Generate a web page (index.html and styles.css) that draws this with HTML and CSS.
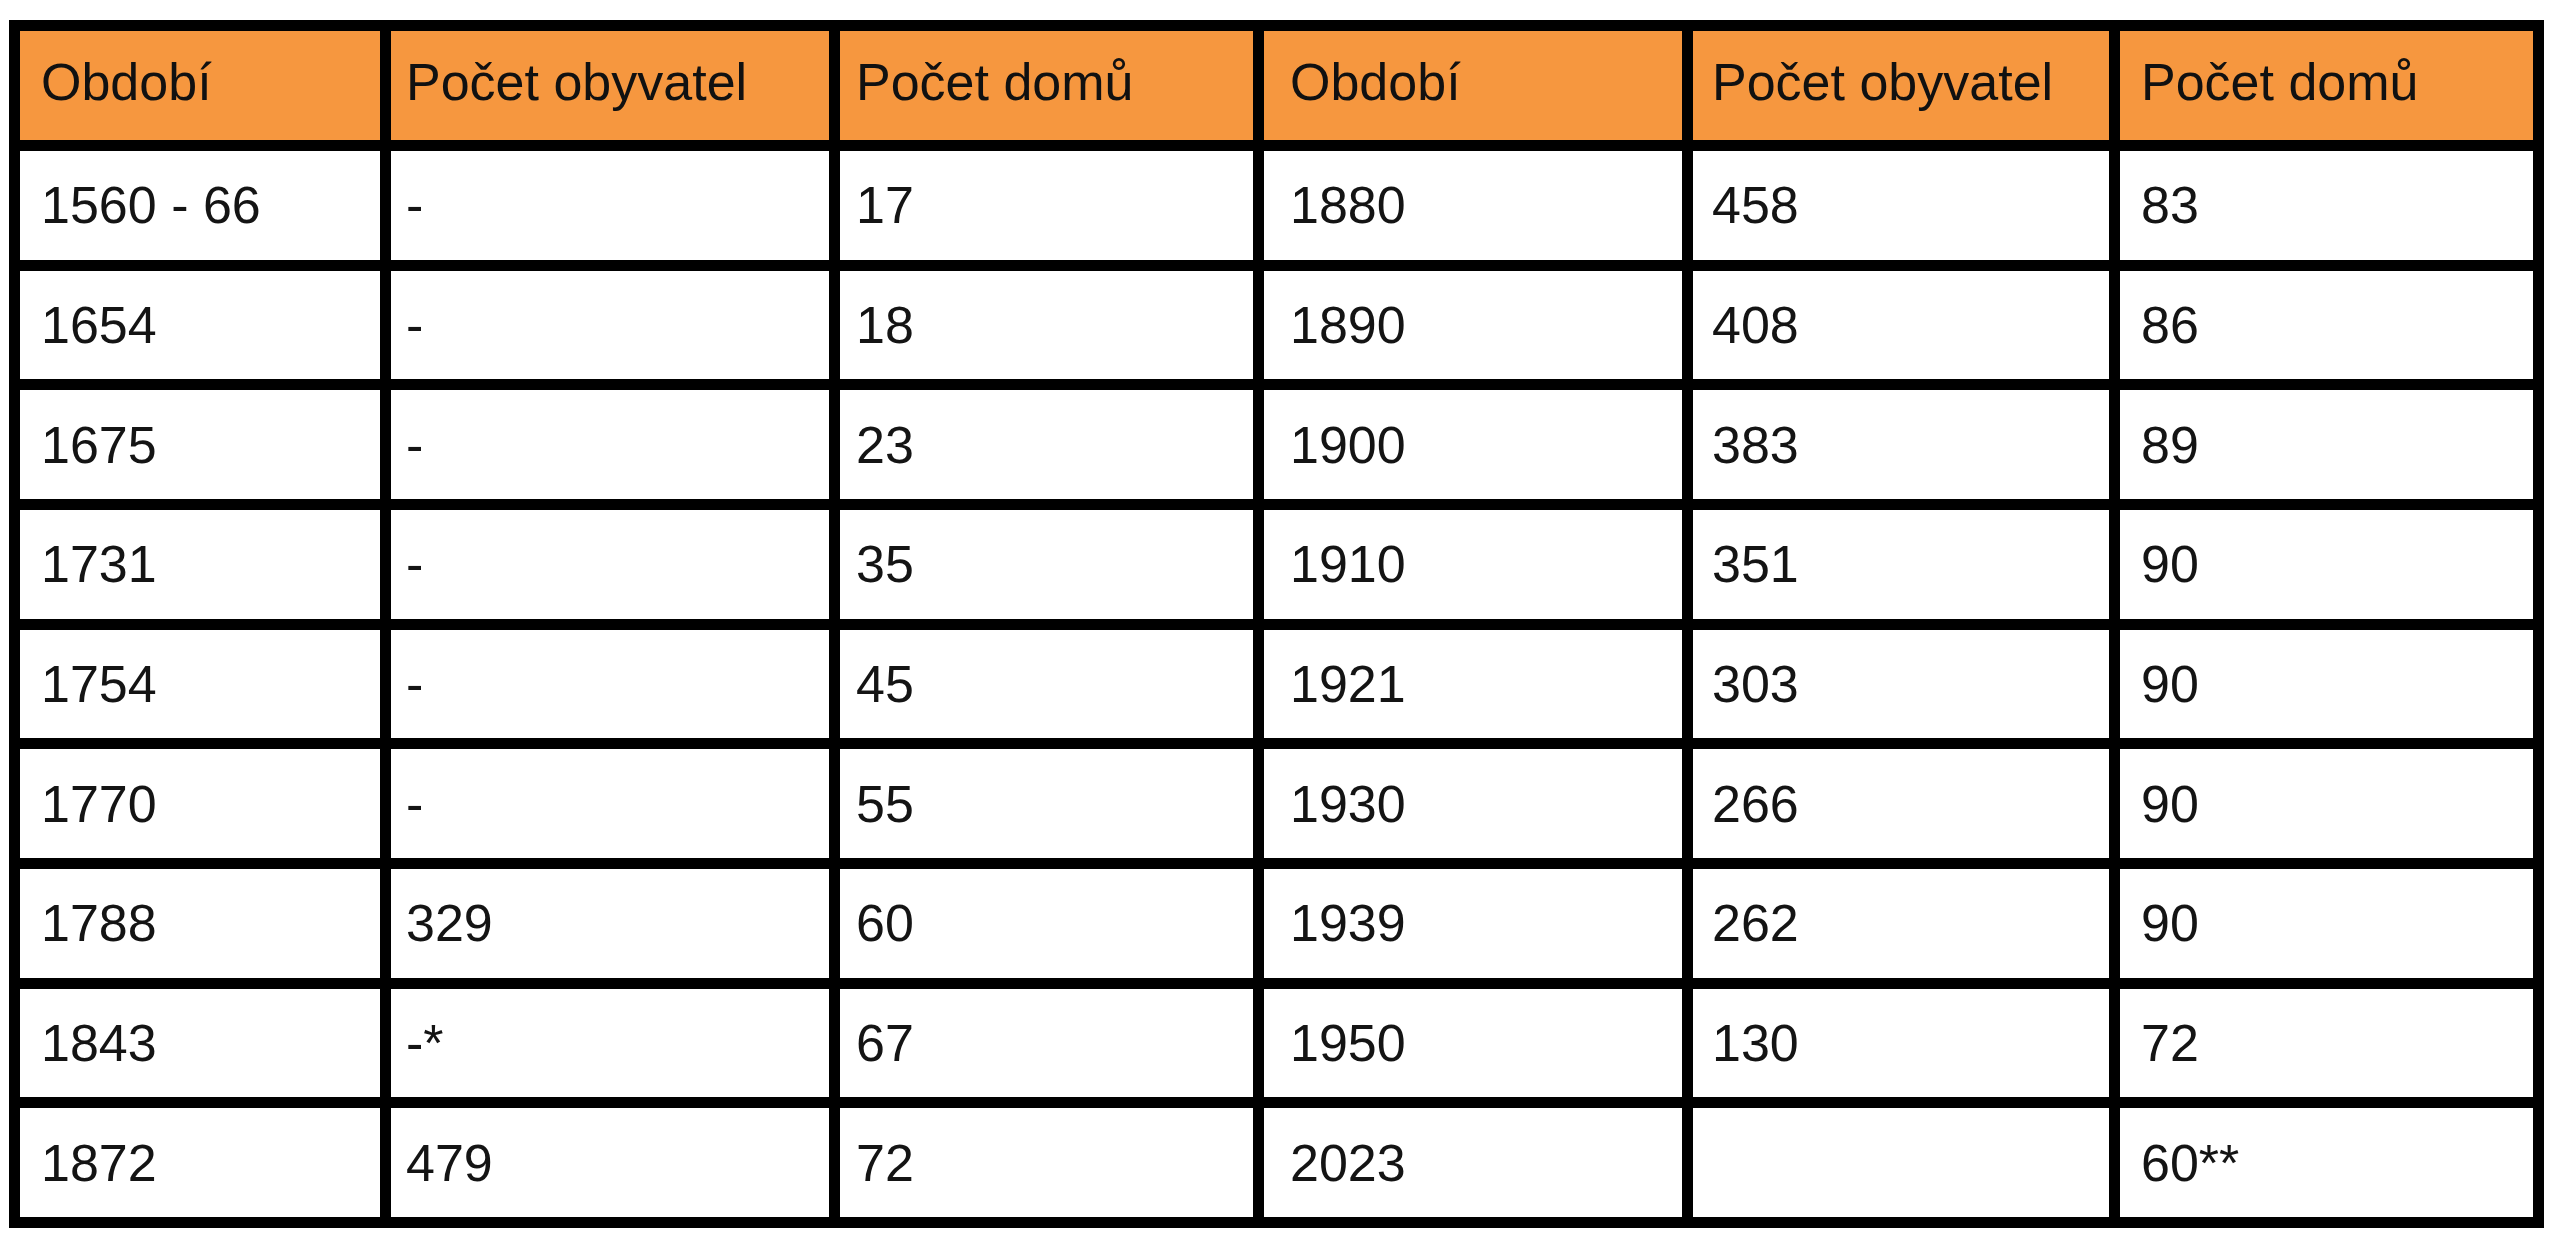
FILE: index.html
```html
<!DOCTYPE html>
<html lang="cs">
<head>
<meta charset="utf-8">
<title>Počet obyvatel a domů</title>
<link rel="stylesheet" href="styles.css">
</head>
<body>
<div class="page">
  <div class="grid" role="table">
    <div class="cell head c1">Období</div>
    <div class="cell head c2">Počet obyvatel</div>
    <div class="cell head c3">Počet domů</div>
    <div class="cell head c4">Období</div>
    <div class="cell head c5">Počet obyvatel</div>
    <div class="cell head c6">Počet domů</div>

    <div class="cell c1">1560 - 66</div><div class="cell c2">-</div><div class="cell c3">17</div>
    <div class="cell c4">1880</div><div class="cell c5">458</div><div class="cell c6">83</div>

    <div class="cell c1">1654</div><div class="cell c2">-</div><div class="cell c3">18</div>
    <div class="cell c4">1890</div><div class="cell c5">408</div><div class="cell c6">86</div>

    <div class="cell c1">1675</div><div class="cell c2">-</div><div class="cell c3">23</div>
    <div class="cell c4">1900</div><div class="cell c5">383</div><div class="cell c6">89</div>

    <div class="cell c1">1731</div><div class="cell c2">-</div><div class="cell c3">35</div>
    <div class="cell c4">1910</div><div class="cell c5">351</div><div class="cell c6">90</div>

    <div class="cell c1">1754</div><div class="cell c2">-</div><div class="cell c3">45</div>
    <div class="cell c4">1921</div><div class="cell c5">303</div><div class="cell c6">90</div>

    <div class="cell c1">1770</div><div class="cell c2">-</div><div class="cell c3">55</div>
    <div class="cell c4">1930</div><div class="cell c5">266</div><div class="cell c6">90</div>

    <div class="cell c1">1788</div><div class="cell c2">329</div><div class="cell c3">60</div>
    <div class="cell c4">1939</div><div class="cell c5">262</div><div class="cell c6">90</div>

    <div class="cell c1">1843</div><div class="cell c2">-*</div><div class="cell c3">67</div>
    <div class="cell c4">1950</div><div class="cell c5">130</div><div class="cell c6">72</div>

    <div class="cell c1">1872</div><div class="cell c2">479</div><div class="cell c3">72</div>
    <div class="cell c4">2023</div><div class="cell c5"></div><div class="cell c6">60**</div>
  </div>
</div>
</body>
</html>
```
FILE: styles.css
```css
html, body {
  margin: 0;
  padding: 0;
  background: #ffffff;
}

.page {
  padding: 20px 0 0 9px;
}

.grid {
  display: grid;
  width: max-content;
  grid-template-columns: 360px 438px 413px 418px 416px 413px;
  grid-template-rows: 109px repeat(9, 108.67px);
  gap: 11px;
  padding: 11px;
  background: #000000;
  font-family: "Liberation Sans", Arial, sans-serif;
  font-size: 52px;
  color: #141414;
}

.cell {
  display: flex;
  align-items: center;
  background: #ffffff;
  white-space: nowrap;
}

.head {
  background: #f6973f;
  color: #111111;
  padding-bottom: 8px;
  box-sizing: border-box;
}

.c1 { padding-left: 21px; }
.c2 { padding-left: 15px; }
.c3 { padding-left: 16px; }
.c4 { padding-left: 26px; }
.c5 { padding-left: 19px; }
.c6 { padding-left: 21px; }
```
